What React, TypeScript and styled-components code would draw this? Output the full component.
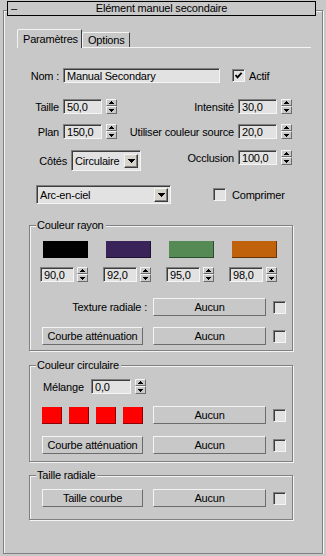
import React from 'react';
import styled, { createGlobalStyle } from 'styled-components';

// Palette (3ds Max classic grey UI)
const BG = '#c8c8c8';
const FIELD = '#e2e2e2';
const MID = '#808080';
const DARK = '#3c3c3c';
const HI = '#f4f4f4';
const EDGE = '#6c6c6c';

const GlobalStyle = createGlobalStyle`
  html, body {
    margin: 0;
    padding: 0;
    background: ${BG};
  }
  body {
    font-family: "Liberation Sans", Arial, sans-serif;
    font-size: 11px;
    letter-spacing: -0.2px;
    color: #000;
  }
`;

// Rollout frame + title
const Rollout = styled.div`
  box-sizing: border-box;
  width: 320px;
  height: 544px;
  margin: 10px 0 0 3px;
  border: 1px solid ${MID};
  box-shadow: inset 1px 1px 0 ${HI}, 1px 1px 0 ${HI};
`;

const TitleBar = styled.div`
  box-sizing: border-box;
  display: grid;
  grid-template-columns: 16px 1fr 16px;
  align-items: center;
  width: 309px;
  height: 15px;
  margin: -10px 0 0 3px;
  border: 1px solid #000;
  background: ${BG};
  line-height: 13px;
`;

const Collapse = styled.span`
  padding-left: 3px;
`;

const TitleText = styled.span`
  text-align: center;
`;

// Tabs
const TabStrip = styled.div`
  display: flex;
  align-items: flex-end;
  height: 18px;
  margin: 13px 11px 0 13px;
  border-bottom: 1px solid ${HI};
`;

const Tab = styled.div<{ $active?: boolean; $w: number }>`
  box-sizing: border-box;
  display: flex;
  align-items: center;
  width: ${p => p.$w}px;
  height: ${p => (p.$active ? 19 : 15)}px;
  margin-bottom: ${p => (p.$active ? -1 : 0)}px;
  padding: ${p => (p.$active ? '0 0 1px 5px' : '0 0 0 5px')};
  background: ${BG};
  border-top: 1px solid ${HI};
  border-left: 1px solid ${HI};
  border-right: 1px solid ${DARK};
  border-top-left-radius: 2px;
  border-top-right-radius: 1px;
`;

// Generic rows
const Row = styled.div<{ $mt: number; $h: number; $pl?: number }>`
  display: flex;
  align-items: center;
  height: ${p => p.$h}px;
  margin-top: ${p => p.$mt}px;
  padding-left: ${p => p.$pl ?? 0}px;
`;

const Cell = styled.div<{ $h: number }>`
  display: flex;
  align-items: center;
  align-self: flex-start;
  height: ${p => p.$h}px;
`;

const Label = styled.span<{ $w: number; $left?: boolean; $mr?: number }>`
  flex-shrink: 0;
  width: ${p => p.$w}px;
  margin-right: ${p => p.$mr ?? 4}px;
  text-align: ${p => (p.$left ? 'left' : 'right')};
  white-space: nowrap;
`;

const Text = styled.span<{ $ml: number }>`
  margin-left: ${p => p.$ml}px;
  white-space: nowrap;
`;

// Controls
const Field = styled.input<{ $w: number }>`
  box-sizing: border-box;
  flex-shrink: 0;
  width: ${p => p.$w}px;
  height: 15px;
  margin: 0;
  padding: 0 0 0 3px;
  border: 1px solid;
  border-color: ${MID} ${HI} ${HI} ${MID};
  box-shadow: inset 1px 1px 0 ${DARK};
  background: ${FIELD};
  font: inherit;
  letter-spacing: inherit;
  color: #000;
  outline: none;
`;

const Spinner = styled.div<{ $ml?: number }>`
  display: flex;
  flex-direction: column;
  flex-shrink: 0;
  width: 11px;
  height: 15px;
  margin-left: ${p => p.$ml ?? 4}px;
`;

const SpinHalf = styled.div<{ $down?: boolean }>`
  box-sizing: border-box;
  display: flex;
  align-items: center;
  justify-content: center;
  height: ${p => (p.$down ? 8 : 7)}px;
  border: 1px solid;
  border-color: ${HI} ${EDGE} ${EDGE} ${HI};
  background: ${BG};
`;

const Select = styled.div<{ $w: number; $h: number }>`
  box-sizing: border-box;
  display: flex;
  align-items: center;
  justify-content: space-between;
  flex-shrink: 0;
  width: ${p => p.$w}px;
  height: ${p => p.$h}px;
  padding: 0 2px 0 3px;
  border: 1px solid;
  border-color: ${MID} ${HI} ${HI} ${MID};
  box-shadow: inset 1px 1px 0 ${DARK};
  background: ${FIELD};
`;

const DropButton = styled.span`
  box-sizing: border-box;
  display: flex;
  align-items: center;
  justify-content: center;
  width: 14px;
  height: 14px;
  border: 1px solid;
  border-color: ${HI} ${DARK} ${DARK} ${HI};
  box-shadow: inset -1px -1px 0 ${MID};
  background: #d6d3cd;
`;

const CheckBox = styled.span<{ $ml?: number }>`
  box-sizing: border-box;
  display: flex;
  align-items: center;
  justify-content: center;
  flex-shrink: 0;
  width: 13px;
  height: 13px;
  margin-left: ${p => p.$ml ?? 0}px;
  border: 1px solid;
  border-color: ${MID} ${HI} ${HI} ${MID};
  box-shadow: inset 1px 1px 0 ${DARK};
  background: ${FIELD};
`;

const Button = styled.button<{ $w: number; $ml?: number }>`
  box-sizing: border-box;
  flex-shrink: 0;
  width: ${p => p.$w}px;
  height: 18px;
  margin: 0 0 0 ${p => p.$ml ?? 0}px;
  padding: 0;
  border: 1px solid;
  border-color: ${HI} ${EDGE} ${EDGE} ${HI};
  background: ${BG};
  font: inherit;
  letter-spacing: inherit;
  color: #000;
`;

const Swatch = styled.div<{ $color: string; $w: number; $ml?: number }>`
  flex-shrink: 0;
  width: ${p => p.$w}px;
  height: 17px;
  margin-left: ${p => p.$ml ?? 0}px;
  background: ${p => p.$color};
  box-shadow: inset -1px -1px 0 rgba(0, 0, 0, 0.45);
`;

// Group boxes
const Group = styled.div<{ $mt: number; $h: number }>`
  box-sizing: border-box;
  width: 264px;
  height: ${p => p.$h}px;
  margin: ${p => p.$mt}px 0 0 25px;
  border: 1px solid ${MID};
  box-shadow: inset 1px 1px 0 ${HI}, 1px 1px 0 ${HI};
`;

const GroupTitle = styled.div`
  width: fit-content;
  height: 13px;
  margin: -7px 0 0 6px;
  padding: 0 2px 0 1px;
  line-height: 13px;
  background: ${BG};
`;

const ColorGrid = styled.div`
  display: grid;
  grid-template-columns: repeat(4, 63px);
  row-gap: 9px;
  margin-top: 9px;
  padding-left: 10px;
`;

const SquareSet = styled.div`
  display: flex;
  gap: 7px;
  width: 101px;
`;

const UpArrow = () => (
  <svg width="5" height="3" viewBox="0 0 5 3" shapeRendering="crispEdges">
    <polygon points="2.5,0 5,3 0,3" fill="#000" />
  </svg>
);

const DownArrow = () => (
  <svg width="5" height="3" viewBox="0 0 5 3" shapeRendering="crispEdges">
    <polygon points="0,0 5,0 2.5,3" fill="#000" />
  </svg>
);

const ComboArrow = () => (
  <svg width="7" height="4" viewBox="0 0 7 4" shapeRendering="crispEdges">
    <polygon points="0,0 7,0 3.5,4" fill="#000" />
  </svg>
);

const Tick = () => (
  <svg width="9" height="9" viewBox="0 0 9 9">
    <polyline points="1.5,4 3.5,6.3 7.6,1.8" fill="none" stroke="#000" strokeWidth="1.8" />
  </svg>
);

const NumField: React.FC<{ value: string; w: number; gap?: number }> = ({ value, w, gap }) => (
  <>
    <Field $w={w} defaultValue={value} readOnly />
    <Spinner $ml={gap}>
      <SpinHalf><UpArrow /></SpinHalf>
      <SpinHalf $down><DownArrow /></SpinHalf>
    </Spinner>
  </>
);

const Combo: React.FC<{ value: string; w: number; h: number }> = ({ value, w, h }) => (
  <Select $w={w} $h={h}>
    <span>{value}</span>
    <DropButton><ComboArrow /></DropButton>
  </Select>
);

const rayColors = [
  { color: '#000000', value: '90,0' },
  { color: '#3a2358', value: '92,0' },
  { color: '#558a55', value: '95,0' },
  { color: '#c0620c', value: '98,0' },
];

export default function App() {
  return (
    <>
      <GlobalStyle />
      <Rollout>
        <TitleBar>
          <Collapse>–</Collapse>
          <TitleText>Elément manuel secondaire</TitleText>
          <span />
        </TitleBar>

        <TabStrip>
          <Tab $active $w={65}>Paramètres</Tab>
          <Tab $w={48}>Options</Tab>
        </TabStrip>

        <Row $mt={20} $h={15}>
          <Label $w={55}>Nom :</Label>
          <Field $w={157} defaultValue="Manual Secondary" readOnly />
          <CheckBox $ml={12}><Tick /></CheckBox>
          <Text $ml={4}>Actif</Text>
        </Row>

        <Row $mt={16} $h={15}>
          <Label $w={55}>Taille</Label>
          <NumField value="50,0" w={39} />
          <Label $w={117}>Intensité</Label>
          <NumField value="30,0" w={39} />
        </Row>

        <Row $mt={10} $h={15}>
          <Label $w={55}>Plan</Label>
          <NumField value="150,0" w={39} />
          <Label $w={117}>Utiliser couleur source</Label>
          <NumField value="20,0" w={39} />
        </Row>

        <Row $mt={11} $h={21}>
          <Cell $h={21}>
            <Label $w={63}>Côtés</Label>
            <Combo value="Circulaire" w={70} h={21} />
          </Cell>
          <Cell $h={15}>
            <Label $w={93}>Occlusion</Label>
            <NumField value="100,0" w={39} />
          </Cell>
        </Row>

        <Row $mt={14} $h={19} $pl={32}>
          <Combo value="Arc-en-ciel" w={135} h={19} />
          <CheckBox $ml={42} />
          <Text $ml={6}>Comprimer</Text>
        </Row>

        <Group $mt={21} $h={126}>
          <GroupTitle>Couleur rayon</GroupTitle>
          <ColorGrid>
            {rayColors.map(c => (
              <Swatch key={c.color} $color={c.color} $w={45} $ml={3} />
            ))}
            {rayColors.map(c => (
              <Row key={c.value} $mt={0} $h={15}>
                <NumField value={c.value} w={34} gap={3} />
              </Row>
            ))}
          </ColorGrid>
          <Row $mt={16} $h={18} $pl={8}>
            <Label $w={109} $mr={6}>Texture radiale :</Label>
            <Button $w={113}>Aucun</Button>
            <CheckBox $ml={7} />
          </Row>
          <Row $mt={11} $h={18} $pl={12}>
            <Button $w={101}>Courbe atténuation</Button>
            <Button $w={113} $ml={10}>Aucun</Button>
            <CheckBox $ml={7} />
          </Row>
        </Group>

        <Group $mt={14} $h={97}>
          <GroupTitle>Couleur circulaire</GroupTitle>
          <Row $mt={7} $h={15} $pl={13}>
            <Label $w={44} $left>Mélange</Label>
            <NumField value="0,0" w={40} />
          </Row>
          <Row $mt={12} $h={18} $pl={12}>
            <SquareSet>
              {[0, 1, 2, 3].map(i => (
                <Swatch key={i} $color="#ff0000" $w={20} />
              ))}
            </SquareSet>
            <Button $w={113} $ml={10}>Aucun</Button>
            <CheckBox $ml={7} />
          </Row>
          <Row $mt={12} $h={18} $pl={12}>
            <Button $w={101}>Courbe atténuation</Button>
            <Button $w={113} $ml={10}>Aucun</Button>
            <CheckBox $ml={7} />
          </Row>
        </Group>

        <Group $mt={13} $h={45}>
          <GroupTitle>Taille radiale</GroupTitle>
          <Row $mt={7} $h={18} $pl={12}>
            <Button $w={101}>Taille courbe</Button>
            <Button $w={113} $ml={10}>Aucun</Button>
            <CheckBox $ml={7} />
          </Row>
        </Group>
      </Rollout>
    </>
  );
}
